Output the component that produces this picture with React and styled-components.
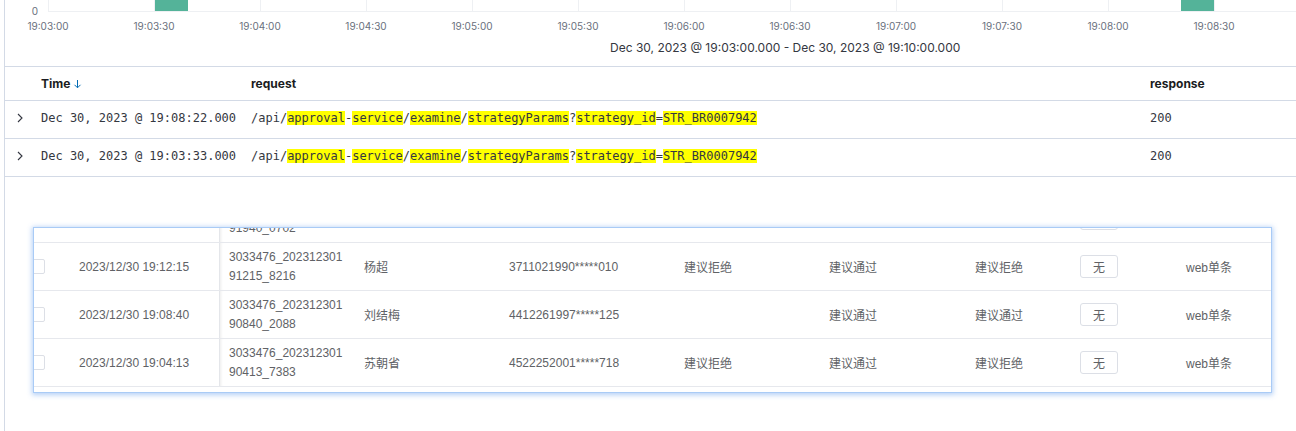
import React from 'react'
import styled, { createGlobalStyle } from 'styled-components'

const GlobalStyle = createGlobalStyle`
  html, body { margin: 0; padding: 0; background: #fff; }
  body { font-family: Inter, "Noto Sans", sans-serif; color: #343741; }
`

const ticks = ['19:03:00','19:03:30','19:04:00','19:04:30','19:05:00','19:05:30','19:06:00','19:06:30','19:07:00','19:07:30','19:08:00','19:08:30']

const logRows = [
  { time: 'Dec 30, 2023 @ 19:08:22.000', response: '200' },
  { time: 'Dec 30, 2023 @ 19:03:33.000', response: '200' },
]

const requestParts = [
  ['/api/', false], ['approval', true], ['-', false], ['service', true], ['/', false],
  ['examine', true], ['/', false], ['strategyParams', true], ['?', false],
  ['strategy_id', true], ['=', false], ['STR_BR0007942', true],
]

const panelRows = [
  { date: '2023/12/30 19:10:40', id: ['3033476_202312301', '91940_0702'], name: '', card: '', a: '', b: '', c: '', src: '' },
  { date: '2023/12/30 19:12:15', id: ['3033476_202312301', '91215_8216'], name: '杨超', card: '3711021990*****010', a: '建议拒绝', b: '建议通过', c: '建议拒绝', src: 'web单条' },
  { date: '2023/12/30 19:08:40', id: ['3033476_202312301', '90840_2088'], name: '刘结梅', card: '4412261997*****125', a: '', b: '建议通过', c: '建议通过', src: 'web单条' },
  { date: '2023/12/30 19:04:13', id: ['3033476_202312301', '90413_7383'], name: '苏朝省', card: '4522252001*****718', a: '建议拒绝', b: '建议通过', c: '建议拒绝', src: 'web单条' },
]

const Page = styled.div`
  margin-left: 4px;
  border-left: 1px solid #d3dae6;
  min-height: 431px;
  box-sizing: border-box;
  overflow: hidden;
`

const ChartSvg = styled.svg`
  display: block;
  width: 1291px;
  height: 36px;
`

const DateRange = styled.div`
  height: 30px;
  line-height: 24px;
  font-size: 12px;
  color: #343741;
  padding-left: 605px;
  white-space: nowrap;
  box-sizing: border-box;
`

const Table = styled.div`
  border-top: 1px solid #d3dae6;
`

const LogRow = styled.div`
  display: grid;
  grid-template-columns: 36px 210px 899px 1fr;
  align-items: center;
  height: ${p => (p.$head ? 33 : 34)}px;
  padding-bottom: ${p => (p.$head ? 0 : 3)}px;
  border-bottom: 1px solid #d3dae6;
  font-size: 12px;
`

const HeadCell = styled.div`
  font-weight: 700;
  color: #1a1c21;
  display: flex;
  align-items: center;
  gap: 3px;
`

const Mono = styled.div`
  font-family: "DejaVu Sans Mono", "Liberation Mono", monospace;
  font-size: 12px;
  color: #343741;
  white-space: nowrap;
`

const Mark = styled.mark`
  background: #ffff00;
  color: #343741;
  padding: 0;
`

const Toggle = styled.div`
  display: flex;
  padding-left: 10px;
`

const Panel = styled.div`
  margin: 50px 0 0 28px;
  width: 1239px;
  height: 166px;
  overflow: hidden;
  background: #fff;
  border: 1px solid #a9cbf6;
  box-sizing: border-box;
  box-shadow: 0 1px 5px 1px rgba(90, 150, 235, 0.45);
`

const PanelBody = styled.div`
  margin-top: -33px;
  margin-left: -1px;
`

const PanelRow = styled.div`
  display: grid;
  grid-template-columns: 46px 140px 145px 145px 175px 145px 146px 105px 106px 1fr;
  height: 48px;
  box-sizing: border-box;
  border-bottom: 1px solid #e6e8ed;
  font-family: "Liberation Sans", "Noto Sans CJK SC", sans-serif;
  font-size: 12px;
  color: #606266;
`

const Cell = styled.div`
  display: flex;
  align-items: center;
  white-space: nowrap;
  ${p => p.$fixed && `
    border-left: 1px solid #e4e6ea;
    box-shadow: inset 3px 0 3px -2px rgba(0,0,0,0.08);
    padding-left: 9px;
  `}
`

const IdText = styled.div`
  line-height: 19px;
`

const Check = styled.span`
  width: 13px;
  height: 13px;
  margin-left: -3px;
  border: 1px solid #dcdfe6;
  border-radius: 2px;
  background: #fff;
`

const TagButton = styled.span`
  width: 36px;
  height: 21px;
  border: 1px solid #dcdfe6;
  border-radius: 3px;
  display: flex;
  align-items: center;
  justify-content: center;
  color: #606266;
`

const Chart = () => (
  <ChartSvg viewBox="0 0 1291 36">
    <line x1="43" y1="11.5" x2="1291" y2="11.5" stroke="#eef0f3" strokeWidth="1" />
    {ticks.map((t, i) => (
      <line key={'g' + t} x1={43.5 + i * 106} y1="0" x2={43.5 + i * 106} y2="11" stroke="#eef0f3" strokeWidth="1" />
    ))}
    <rect x="150" y="0" width="33" height="11" fill="#54b399" />
    <rect x="1176" y="0" width="33" height="11" fill="#54b399" />
    <text x="33" y="15" textAnchor="end" fontSize="10" fill="#69707d" fontFamily="Inter, sans-serif">0</text>
    {ticks.map((t, i) => (
      <text key={t} x={43 + i * 106} y="29.5" textAnchor="middle" fontSize="10" fill="#69707d" fontFamily="Inter, sans-serif">{t}</text>
    ))}
  </ChartSvg>
)

const Chevron = () => (
  <svg width="10" height="12" viewBox="0 0 10 12">
    <path d="M3 2 L7 6 L3 10" fill="none" stroke="#343741" strokeWidth="1.1" />
  </svg>
)

const SortDown = () => (
  <svg width="9" height="10" viewBox="0 0 9 10">
    <path d="M4.5 1 V8.5 M1.5 5.8 L4.5 8.8 L7.5 5.8" fill="none" stroke="#006bb4" strokeWidth="1" />
  </svg>
)

const App = () => {
  return (
    <Page>
      <GlobalStyle />
      <Chart />
      <DateRange>Dec 30, 2023 @ 19:03:00.000 - Dec 30, 2023 @ 19:10:00.000</DateRange>
      <Table>
        <LogRow $head>
          <div />
          <HeadCell>Time <SortDown /></HeadCell>
          <HeadCell>request</HeadCell>
          <HeadCell>response</HeadCell>
        </LogRow>
        {logRows.map(r => (
          <LogRow key={r.time}>
            <Toggle><Chevron /></Toggle>
            <Mono>{r.time}</Mono>
            <Mono>
              {requestParts.map(([t, hl], i) => (hl ? <Mark key={i}>{t}</Mark> : <span key={i}>{t}</span>))}
            </Mono>
            <Mono>{r.response}</Mono>
          </LogRow>
        ))}
      </Table>
      <Panel>
        <PanelBody>
          {panelRows.map(r => (
            <PanelRow key={r.id[1]}>
              <Cell><Check /></Cell>
              <Cell>{r.date}</Cell>
              <Cell $fixed><IdText>{r.id[0]}<br />{r.id[1]}</IdText></Cell>
              <Cell>{r.name}</Cell>
              <Cell>{r.card}</Cell>
              <Cell>{r.a}</Cell>
              <Cell>{r.b}</Cell>
              <Cell>{r.c}</Cell>
              <Cell><TagButton>无</TagButton></Cell>
              <Cell>{r.src}</Cell>
            </PanelRow>
          ))}
        </PanelBody>
      </Panel>
    </Page>
  )
}

export default App
